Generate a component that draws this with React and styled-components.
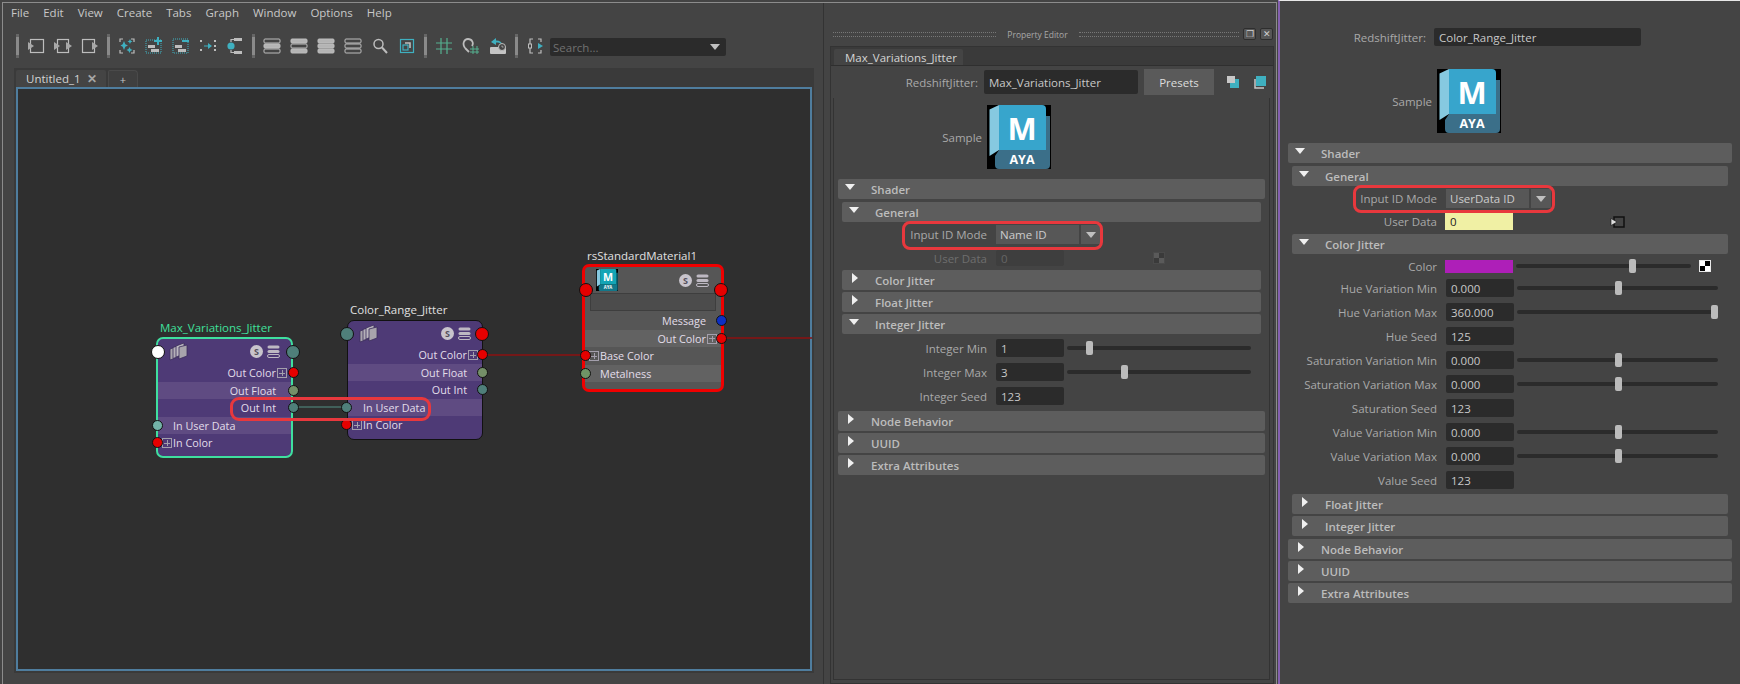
import React from "react";
import styled, { createGlobalStyle } from "styled-components";

const GlobalStyle = createGlobalStyle`
	html, body {
		margin: 0;
		padding: 0;
		background: #444444;
		overflow: hidden;
	}
	* {
		box-sizing: border-box;
	}
	body {
		font-family: "Open Sans", "Liberation Sans", sans-serif;
		font-size: 12px;
		color: #c4c4c4;
	}
`;

const MENU = ["File", "Edit", "View", "Create", "Tabs", "Graph", "Window", "Options", "Help"];

const TEAL = "#3fb0c0";
const GREY = "#bdbdbd";

// toolbar drawings, 18 x 18
const arrowLeft = (
	<>
		<rect x="3.5" y="2.5" width="13" height="13" fill="none" stroke={GREY} strokeWidth="1.2" />
		<path d="M1 5l6 4-6 4z" fill="#a8a8a8" />
	</>
);
const arrowBoth = (
	<>
		<rect x="3.5" y="2.5" width="11" height="13" fill="none" stroke={GREY} strokeWidth="1.2" />
		<path d="M0 5l6 4-6 4zM12 5l6 4-6 4z" fill="#a8a8a8" />
	</>
);
const arrowRight = (
	<>
		<rect x="1.5" y="2.5" width="12" height="13" fill="none" stroke={GREY} strokeWidth="1.2" />
		<path d="M11 5l6 4-6 4z" fill="#a8a8a8" />
	</>
);
const sparkle = (
	<>
		<path d="M2 5V2h3M13 2h3v3M2 13v3h3M13 16h3v-3" fill="none" stroke={GREY} strokeWidth="1.2" />
		<path d="M6 4l1.3 3.2L10 8.5 7.3 9.8 6 13 4.7 9.8 2.5 8.5l2.2-1.3zM12 2l.8 1.8 1.7.7-1.7.8L12 7l-.8-1.7-1.7-.8 1.7-.7zM11.5 10l1 2 2 1-2 1-1 2-1-2-2-1 2-1z" fill={TEAL} />
	</>
);
const dottedPlus = (
	<>
		<rect x="1" y="3" width="15" height="13" fill="none" stroke={TEAL} strokeWidth="1" strokeDasharray="1 1" />
		<rect x="3" y="8" width="7" height="3" fill={GREY} />
		<rect x="6" y="12" width="8" height="3" fill={GREY} />
		<path d="M9 4h8M13 0v8" stroke={TEAL} strokeWidth="2" />
	</>
);
const dottedMinus = (
	<>
		<rect x="1" y="2" width="15" height="14" fill="none" stroke={TEAL} strokeWidth="1" strokeDasharray="1 1" />
		<rect x="3" y="8" width="7" height="3" fill={GREY} />
		<rect x="6" y="12" width="8" height="3" fill={GREY} />
		<path d="M10 4h7" stroke={TEAL} strokeWidth="2" />
	</>
);
const dotsArrow = (
	<>
		<path d="M1 3h2v2H1zM1 12h2v2H1zM15 3h2v2h-2zM15 8h2v2h-2zM15 12h2v2h-2z" fill={GREY} />
		<path d="M5 8.5h4V6l4 3-4 3V9.5H5z" fill={TEAL} />
	</>
);
const branch = (
	<>
		<circle cx="5" cy="9" r="3.6" fill={TEAL} />
		<path d="M5 5V2.5h3M5 13v2.5h3" fill="none" stroke={GREY} strokeWidth="1.2" />
		<rect x="8" y="1" width="8" height="3" fill={GREY} />
		<rect x="8" y="14" width="8" height="3" fill={GREY} />
	</>
);
const listIcon = (fills) => (
	<>
		{[2, 7, 12].map((y, i) => (
			<rect key={y} x="1" y={y} width="16" height="4" rx="1" fill={fills[i] ? "#b4b4b4" : "none"} stroke={GREY} strokeWidth="1" />
		))}
	</>
);
const magnifier = (
	<>
		<circle cx="7.5" cy="7" r="4.5" fill="none" stroke={GREY} strokeWidth="1.5" />
		<path d="M11 10.5l5 5.5" stroke={GREY} strokeWidth="2" />
	</>
);
const framed = (
	<>
		<rect x="2.5" y="2.5" width="13" height="13" fill="none" stroke={TEAL} strokeWidth="1.2" />
		<rect x="5" y="8" width="5" height="5" fill="none" stroke={TEAL} strokeWidth="1.2" />
		<path d="M7 6h5v5" fill="none" stroke={GREY} strokeWidth="1.6" />
	</>
);
const grid = <path d="M6 1v16M12 1v16M1 6h16M1 12h16" stroke="#55b08f" strokeWidth="1.2" />;
const magnet = (
	<>
		<path d="M3 11C0 7 2 2 6 2s6 4 4 7" fill="none" stroke={GREY} strokeWidth="1.8" />
		<path d="M3 11l4 4" stroke={GREY} strokeWidth="1.8" />
		<path d="M11 9v8M15 9v8M8 12h9M8 15h9" stroke="#55b08f" strokeWidth="1" />
	</>
);
const undoClock = (
	<>
		<path d="M2 5l5-4v2.5c4 0 6 1.5 6 4.5-1.500-2-3-2.500-6-2.500V8z" fill={TEAL} />
		<rect x="1" y="10" width="16" height="7" rx="1" fill="#c4c4c4" />
		<circle cx="13" cy="10" r="3.500" fill="#444" stroke={GREY} strokeWidth="1" />
		<path d="M13 8.500V10h1.500" stroke={GREY} strokeWidth="0.8" fill="none" />
	</>
);
const bracket = (
	<>
		<path d="M7 2H4v5M4 11v5h3M12 2h3v3M15 13v3h-3" fill="none" stroke={GREY} strokeWidth="1.2" />
		<rect x="2.500" y="7" width="3" height="4" fill="none" stroke={GREY} strokeWidth="1" />
		<path d="M12 6l5 3-5 3z" fill={TEAL} />
	</>
);

const TOOLS = [
	"grip", arrowLeft, arrowBoth, arrowRight,
	"grip", sparkle, dottedPlus, dottedMinus, dotsArrow, branch,
	"grip", listIcon([0, 1, 0]), listIcon([1, 0, 1]), listIcon([1, 1, 1]), listIcon([0, 0, 0]), magnifier, framed,
	"grip", grid, magnet, undoClock,
	"grip", bracket,
];

const MayaLogo = ({ $color = "#37a5cc", $dark = "#3b6f89", $size = 64 }) => (
	<LogoSvg viewBox="0 0 64 64" width={$size} height={$size}>
		<rect width="64" height="64" fill="#000" />
		<path d="M2.500 4.500L12 0v45l-9.500 6z" fill="#86c9e0" />
		<path d="M8 51l4-6h47V11h4v49a4 4 0 0 1-4 4H12a4 4 0 0 1-4-4z" fill={$dark} />
		<path d="M12 0h43a4 4 0 0 1 4 4v41H12z" fill={$color} />
		<text x="35" y="35" textAnchor="middle" fontFamily="Open Sans" fontWeight="700" fontSize="31" fill="#fff">M</text>
		<text x="35" y="59" textAnchor="middle" fontFamily="Open Sans" fontWeight="700" fontSize="12.500" fill="#fff">AYA</text>
	</LogoSvg>
);

const StackIcon = () => (
	<svg width="20" height="20" viewBox="0 0 20 20">
		<path d="M1 7l8-3v11l-8 3z" fill="#a8a4ac" stroke="#3a2c5a" strokeWidth="0.8" />
		<path d="M4 5.500l8-3v11l-8 3z" fill="#b4b0b8" stroke="#3a2c5a" strokeWidth="0.8" />
		<path d="M7 4l8-3v11l-8 3z" fill="#bcb8c0" stroke="#3a2c5a" strokeWidth="0.8" />
		<path d="M10 5l8-2v11l-8 3z" fill="#a8a4ac" stroke="#3a2c5a" strokeWidth="0.8" />
	</svg>
);

const ListBars = () => (
	<svg width="13" height="13" viewBox="0 0 13 13">
		<rect x="0.500" y="0.500" width="12" height="3" rx="1.500" fill="#bdb8c2" />
		<rect x="0.500" y="5" width="12" height="3" rx="1.500" fill="#bdb8c2" />
		<rect x="0.500" y="9.500" width="12" height="3" rx="1.500" fill="none" stroke="#bdb8c2" />
	</svg>
);

const GraphNode = ({ title, $x, $y, $width, $border, $titleColor, $bg, $stripe, $ports, $pad, headerPort, logo, nameField, rows }) => (
	<NodeBox $x={$x} $y={$y} $width={$width} $border={$border} $bg={$bg} $stripe={$stripe} $ports={$ports} $pad={$pad}>
		<NodeTitle $color={$titleColor}>{title}</NodeTitle>
		<NodeHeader $field={nameField}>
			<Port $side="left" $big $color={headerPort[0]} />
			<Port $side="right" $big $color={headerPort[1]} />
			<HeaderIcon>{logo ? <MayaLogo $color="#14a5b5" $dark="#13788a" $size={22} /> : <StackIcon />}</HeaderIcon>
			<HeaderRight>
				<SBadge>S</SBadge>
				<ListBars />
			</HeaderRight>
			{nameField && <NameBox />}
		</NodeHeader>
		<NodeRows>
			{rows.map((r) => (
				<NodeRow key={r.label} $in={r.in}>
					{r.plus && <PlusBox $in={r.in} />}
					{r.label}
					<Port $side={r.in ? "left" : "right"} $color={r.color} />
				</NodeRow>
			))}
		</NodeRows>
	</NodeBox>
);

const Section = ({ title, open }) => (
	<Bar>
		<Arrow $open={open} />
		<BarTitle>{title}</BarTitle>
	</Bar>
);

const Slider = ({ width, pos }) => (
	<Track $width={width}>
		<Thumb style={{ left: `${pos}px` }} />
	</Track>
);

const NumberRow = ({ label, value, width, pos }) => (
	<AttrRow>
		<AttrLabel>{label}</AttrLabel>
		<Field>{value}</Field>
		{pos !== undefined && <Slider width={width} pos={pos} />}
	</AttrRow>
);

const Combo = ({ value, $width }) => (
	<ComboBox>
		<ComboText $width={$width}>{value}</ComboText>
		<ComboArrow>
			<DownTriangle />
		</ComboArrow>
	</ComboBox>
);

const JITTER_ROWS = [
	["Hue Variation Min", "0.000", 98],
	["Hue Variation Max", "360.000", 194],
	["Hue Seed", "125"],
	["Saturation Variation Min", "0.000", 98],
	["Saturation Variation Max", "0.000", 98],
	["Saturation Seed", "123"],
	["Value Variation Min", "0.000", 98],
	["Value Variation Max", "0.000", 98],
	["Value Seed", "123"],
];

export default function App() {
	return (
		<Page>
			<GlobalStyle />
			<EditorWindow>
				<GraphPane>
					<MenuBar>
						{MENU.map((m) => (
							<MenuItem key={m}>{m}</MenuItem>
						))}
					</MenuBar>
					<Toolbar>
						{TOOLS.map((t, i) =>
							t === "grip" ? (
								<GripSlot key={i}>
									<Grip />
								</GripSlot>
							) : (
								<ToolSlot key={i}>
									<svg width="18" height="18" viewBox="0 0 18 18">
										{t}
									</svg>
								</ToolSlot>
							),
						)}
						<SearchBox>
							Search...
							<DownTriangle />
						</SearchBox>
					</Toolbar>
					<GraphFrame>
						<TabStrip>
							<GraphTab>
								Untitled_1
								<TabClose>✕</TabClose>
							</GraphTab>
							<PlusTab>+</PlusTab>
						</TabStrip>
						<Canvas>
							<Wires width="794" height="580">
								<path d="M466 266H566M706 249H794" stroke="#8c1212" strokeWidth="1.500" fill="none" />
								<path d="M275 318H329" stroke="#41605a" strokeWidth="2" fill="none" />
							</Wires>
							<GraphNode
								title="Max_Variations_Jitter"
								$x={138}
								$y={248}
								$width={137}
								$border="2px solid #3fdf9f"
								$titleColor="#3fe09c"
								$bg="#4e3a76"
								$stripe="#5f4b82"
								$ports={["-6.500px", "-7.500px"]}
								$pad="4px"
								headerPort={["#ffffff", "#4f7f7a"]}
								rows={[
									{ label: "Out Color", color: "#e60000", plus: true },
									{ label: "Out Float", color: "#748f68" },
									{ label: "Out Int", color: "#4f7f7a" },
									{ label: "In User Data", color: "#74b3a8", in: true },
									{ label: "In Color", color: "#e60000", in: true, plus: true },
								]}
							/>
							<GraphNode
								title="Color_Range_Jitter"
								$x={329}
								$y={231}
								$width={136}
								$border="1px solid #111"
								$titleColor="#e0e0e0"
								$bg="#4e3a76"
								$stripe="#5f4b82"
								$ports={["-7.500px", "-5.500px"]}
								$pad="5px"
								headerPort={["#4f7f7a", "#e60000"]}
								rows={[
									{ label: "Out Color", color: "#e60000", plus: true },
									{ label: "Out Float", color: "#748f68" },
									{ label: "Out Int", color: "#4f7f7a" },
									{ label: "In User Data", color: "#4f7f7a", in: true },
									{ label: "In Color", color: "#e60000", in: true, plus: true },
								]}
							/>
							<GraphNode
								title="rsStandardMaterial1"
								$x={564}
								$y={175}
								$width={142}
								$border="3px solid #f00000"
								$titleColor="#e0e0e0"
								$bg="#565656"
								$stripe="#626262"
								$ports={["-5.500px", "-5.500px"]}
								$pad="7px"
								headerPort={["#e60000", "#e60000"]}
								logo
								nameField
								rows={[
									{ label: "Message", color: "#0c2fc4" },
									{ label: "Out Color", color: "#e60000", plus: true },
									{ label: "Base Color", color: "#e60000", in: true, plus: true },
									{ label: "Metalness", color: "#6f9466", in: true },
								]}
							/>
							<WireHighlight />
						</Canvas>
					</GraphFrame>
				</GraphPane>

				<PropertyPane>
					<TitleBar>
						<Dots $width={163} />
						<PaneTitle>Property Editor</PaneTitle>
						<Dots $width={160} />
						<PaneButton>❐</PaneButton>
						<PaneButton>✕</PaneButton>
					</TitleBar>
					<PropFrame>
						<PropTabs>
							<PropTab>Max_Variations_Jitter</PropTab>
						</PropTabs>
						<NameRow>
							<NameLabel>RedshiftJitter:</NameLabel>
							<NameField $width={154}>Max_Variations_Jitter</NameField>
							<PresetsButton>Presets</PresetsButton>
							<SmallIcon $left={13}>
								<svg width="12" height="12" viewBox="0 0 12 12">
									<rect width="8" height="7" fill="#c8c8c8" />
									<path d="M8 3h4v9H3V7h5z" fill={TEAL} />
								</svg>
							</SmallIcon>
							<SmallIcon $left={14}>
								<svg width="13" height="13" viewBox="0 0 13 13">
									<rect x="3" width="10" height="10" fill={TEAL} />
									<path d="M2 3v9h9" fill="none" stroke="#c8c8c8" strokeWidth="1.500" />
								</svg>
							</SmallIcon>
						</NameRow>
						<Scroller>
							<SampleRow>
								<SampleLabel>Sample</SampleLabel>
								<MayaLogo />
							</SampleRow>
							<Section title="Shader" open />
							<SubGroup>
								<Section title="General" open />
								<AttrRow $first>
									<AttrLabel>Input ID Mode</AttrLabel>
									<Combo value="Name ID" $width={83} />
									<RedRing $left={60} $top={-4} $w={201} $h={29} />
								</AttrRow>
								<UserDataRow>
									<AttrLabel $dim>User Data</AttrLabel>
									<Field $dim>0</Field>
									<Checker $dim $left={89} />
								</UserDataRow>
								<Section title="Color Jitter" />
								<Section title="Float Jitter" />
								<Section title="Integer Jitter" open />
								<IntegerRows>
									<NumberRow label="Integer Min" value="1" width={184} pos={19} />
									<NumberRow label="Integer Max" value="3" width={184} pos={54} />
									<NumberRow label="Integer Seed" value="123" />
								</IntegerRows>
							</SubGroup>
							<Section title="Node Behavior" />
							<Section title="UUID" />
							<Section title="Extra Attributes" />
						</Scroller>
					</PropFrame>
				</PropertyPane>
			</EditorWindow>

			<SidePanel>
				<SideName>
					<NameLabel $side>RedshiftJitter:</NameLabel>
					<NameField $width={207} $short>Color_Range_Jitter</NameField>
				</SideName>
				<SampleRow>
					<SampleLabel>Sample</SampleLabel>
					<MayaLogo />
				</SampleRow>
				<Section title="Shader" open />
				<SubGroup>
					<Section title="General" open />
					<AttrRow $first>
						<AttrLabel>Input ID Mode</AttrLabel>
						<Combo value="UserData ID" $width={83} />
						<RedRing $left={61} $top={-4} $w={202} $h={28} />
					</AttrRow>
					<SideDataRow>
						<AttrLabel>User Data</AttrLabel>
						<YellowField>0</YellowField>
						<MapIcon viewBox="0 0 16 12" width="16" height="12">
							<rect x="4" y="1" width="10" height="10" fill="none" stroke="#111" strokeWidth="1.500" />
							<path d="M1 2.500l6 3.500-6 3.500z" fill="#ddd" stroke="#111" strokeWidth="0.600" />
						</MapIcon>
					</SideDataRow>
					<Section title="Color Jitter" open />
					<ColorRow>
						<AttrLabel>Color</AttrLabel>
						<Swatch />
						<Slider width={175} pos={113} />
						<Checker $left={8} />
					</ColorRow>
					<JitterRows>
						{JITTER_ROWS.map(([label, value, pos]) => (
							<NumberRow key={label} label={label} value={value} width={201} pos={pos} />
						))}
					</JitterRows>
					<Section title="Float Jitter" />
					<Section title="Integer Jitter" />
				</SubGroup>
				<Section title="Node Behavior" />
				<Section title="UUID" />
				<Section title="Extra Attributes" />
			</SidePanel>
		</Page>
	);
}

const Page = styled.div`
	width: 1740px;
	height: 684px;
	display: flex;
	background: #444444;
	overflow: hidden;
`;

const EditorWindow = styled.div`
	width: 1275px;
	height: 682px;
	margin: 2px 0 0 2px;
	display: flex;
	border-top: 1px solid #8c8c8c;
	border-left: 1px solid #8c8c8c;
	border-right: 1px solid #8c8c8c;
	background: #444444;
	flex-shrink: 0;
`;

const GraphPane = styled.div`
	width: 821px;
	display: flex;
	flex-direction: column;
	border-right: 1px solid #333333;
`;

const MenuBar = styled.div`
	height: 18px;
	display: flex;
	align-items: center;
	gap: 14px;
	padding-left: 8px;
`;

const MenuItem = styled.span`
	font-size: 11.5px;
	color: #c8c8c8;
`;

const Toolbar = styled.div`
	height: 28px;
	margin: 11px 0 8px;
	padding-left: 9px;
	display: flex;
	align-items: center;
`;

const GripSlot = styled.div`
	width: 10px;
	display: flex;
	justify-content: center;
`;

const Grip = styled.div`
	width: 3px;
	height: 24px;
	background: linear-gradient(#666 0 3px, #8a8a8a 3px 21px, #666 21px);
`;

const ToolSlot = styled.div`
	width: 27px;
	height: 18px;
	display: flex;
	justify-content: center;
`;

const SearchBox = styled.div`
	width: 176px;
	height: 18px;
	margin: 2px 0 0 2px;
	padding: 0 6px 0 3px;
	display: flex;
	align-items: center;
	justify-content: space-between;
	background: #2b2b2b;
	border-radius: 2px;
	color: #717171;
	font-size: 11.5px;
`;

const DownTriangle = styled.span`
	width: 0;
	height: 0;
	border-left: 5px solid transparent;
	border-right: 5px solid transparent;
	border-top: 6px solid #c0c0c0;
`;

const GraphFrame = styled.div`
	width: 800px;
	height: 605px;
	margin-left: 11px;
	display: flex;
	flex-direction: column;
	background: #3a3a3a;
`;

const TabStrip = styled.div`
	height: 19px;
	padding: 2px 0 0 2px;
	display: flex;
	gap: 2px;
	flex-shrink: 0;
`;

const GraphTab = styled.div`
	width: 90px;
	height: 17px;
	padding-left: 10px;
	display: flex;
	align-items: center;
	background: #444444;
	border-radius: 2px 2px 0 0;
	font-size: 11.5px;
	color: #d4d4d4;
`;

const TabClose = styled.span`
	margin-left: 6px;
	font-size: 12px;
	font-weight: 700;
	color: #a6a6a6;
`;

const PlusTab = styled.div`
	width: 30px;
	height: 17px;
	display: flex;
	align-items: center;
	justify-content: center;
	border: 1px solid #4a4a4a;
	border-bottom: 0;
	border-radius: 2px 4px 0 0;
	background: #3f3f3f;
	font-size: 11px;
`;

const Canvas = styled.div`
	position: relative;
	flex: 1;
	margin: 0 2px 2px;
	border: 2px solid #4f7d9e;
	background: #2f2f2f;
`;

const Wires = styled.svg`
	position: absolute;
	left: 0;
	top: 0;
`;

const NodeBox = styled.div`
	position: absolute;
	left: ${(p) => p.$x}px;
	top: ${(p) => p.$y}px;
	width: ${(p) => p.$width}px;
	border: ${(p) => p.$border};
	border-radius: 7px;
	background: ${(p) => p.$bg};
	padding-bottom: ${(p) => p.$pad};
	--port-left: ${(p) => p.$ports[0]};
	--port-right: ${(p) => p.$ports[1]};
	--stripe: ${(p) => p.$stripe};
`;

const NodeTitle = styled.div`
	position: absolute;
	left: 2px;
	bottom: calc(100% + 4px);
	white-space: nowrap;
	font-size: 11.5px;
	color: ${(p) => p.$color};
`;

const NodeHeader = styled.div`
	position: relative;
	height: ${(p) => (p.$field ? 45 : 25)}px;
	padding: ${(p) => (p.$field ? "2px 12px 0 11px" : "0 11px 0 11px")};
	display: flex;
	justify-content: space-between;
	align-items: ${(p) => (p.$field ? "flex-start" : "center")};
`;

const HeaderIcon = styled.div`
	display: flex;
`;

const LogoSvg = styled.svg`
	display: block;
	flex-shrink: 0;
`;

const HeaderRight = styled.div`
	display: flex;
	align-items: center;
	gap: 4px;
	height: 22px;
`;

const SBadge = styled.span`
	width: 13px;
	height: 13px;
	border-radius: 50%;
	background: #c8c4cc;
	color: #55505c;
	font-size: 9px;
	font-weight: 700;
	line-height: 13px;
	text-align: center;
`;

const NameBox = styled.div`
	position: absolute;
	left: 5px;
	top: 26px;
	width: 126px;
	height: 18px;
	background: #4c4c4c;
	border: 1px solid #3e3e3e;
`;

const NodeRows = styled.div`
	display: flex;
	flex-direction: column;
`;

const NodeRow = styled.div`
	position: relative;
	height: 17.5px;
	line-height: 17.5px;
	padding: 0 15px;
	text-align: ${(p) => (p.$in ? "left" : "right")};
	font-size: 10.8px;
	color: #e2deea;
	white-space: nowrap;

	&:nth-child(even) {
		background: var(--stripe);
	}
`;

const PlusBox = styled.span`
	position: absolute;
	top: 4px;
	${(p) => (p.$in ? "left: 4px;" : "right: 4px;")}
	width: 10px;
	height: 10px;
	border: 1px solid #a39fac;
	background:
		linear-gradient(#a39fac, #a39fac) center / 6px 1px no-repeat,
		linear-gradient(#a39fac, #a39fac) center / 1px 6px no-repeat;
`;

const Port = styled.span`
	position: absolute;
	z-index: 2;
	top: 50%;
	${(p) => (p.$side === "left" ? "left: var(--port-left);" : "right: var(--port-right);")}
	width: ${(p) => (p.$big ? 14 : 11)}px;
	height: ${(p) => (p.$big ? 14 : 11)}px;
	margin-top: ${(p) => (p.$big ? -7 : -5.5)}px;
	${(p) => p.$big && "margin-left: -1px; margin-right: -1px;"}
	border-radius: 50%;
	border: 1px solid #111111;
	background: ${(p) => p.$color};
`;

const WireHighlight = styled.div`
	position: absolute;
	left: 212px;
	top: 308px;
	width: 201px;
	height: 24px;
	border: 3px solid #e8383d;
	border-radius: 9px;
	z-index: 3;
`;

const PropertyPane = styled.div`
	width: 452px;
	display: flex;
	flex-direction: column;
	padding: 0 2px 0 6px;
`;

const TitleBar = styled.div`
	height: 43px;
	padding: 19px 0 0 3px;
	display: flex;
	align-items: center;
`;

const Dots = styled.div`
	width: ${(p) => p.$width}px;
	height: 5px;
	border-top: 1px dotted #777777;
	border-bottom: 1px dotted #777777;
`;

const PaneTitle = styled.div`
	width: 83px;
	text-align: center;
	font-size: 8.5px;
	color: #a8a8a8;
	white-space: nowrap;
`;

const PaneButton = styled.div`
	width: 13px;
	height: 12px;
	margin-left: 4px;
	border: 1px solid #2e2e2e;
	border-radius: 2px;
	background: #565656;
	color: #d0d0d0;
	font-size: 9px;
	line-height: 10px;
	text-align: center;
	overflow: hidden;
`;

const PropFrame = styled.div`
	flex: 1;
	display: flex;
	flex-direction: column;
	border: 1px solid #333333;
	min-height: 0;
`;

const PropTabs = styled.div`
	height: 19px;
	padding: 2px 0 0 3px;
	background: #3a3a3a;
	border-bottom: 1px solid #2f2f2f;
	flex-shrink: 0;
`;

const PropTab = styled.div`
	width: 129px;
	height: 16px;
	padding-left: 11px;
	background: #444444;
	border-radius: 2px 2px 0 0;
	font-size: 11.5px;
	line-height: 17px;
	color: #d4d4d4;
`;

const NameRow = styled.div`
	height: 32px;
	display: flex;
	align-items: center;
	flex-shrink: 0;
`;

const NameLabel = styled.div`
	width: ${(p) => (p.$side ? 138 : 147)}px;
	margin-right: ${(p) => (p.$side ? 8 : 6)}px;
	text-align: right;
	font-size: 11.5px;
	color: #a9a9a9;
`;

const NameField = styled.div`
	width: ${(p) => p.$width}px;
	height: ${(p) => (p.$short ? 18 : 24)}px;
	padding-left: 5px;
	display: flex;
	align-items: center;
	background: #2b2b2b;
	border-radius: 2px;
	font-size: 11.5px;
	color: #c8c8c8;
`;

const PresetsButton = styled.div`
	width: 70px;
	height: 26px;
	margin-left: 6px;
	display: flex;
	align-items: center;
	justify-content: center;
	background: #5a5a5a;
	font-size: 11.5px;
	color: #dddddd;
`;

const SmallIcon = styled.div`
	margin-left: ${(p) => p.$left}px;
	display: flex;
`;

const Scroller = styled.div`
	flex: 1;
	margin: 0 3px 3px 2px;
	padding: 7px 4px 0;
	border: 1px solid #333333;
	border-top: 0;
`;

const SampleRow = styled.div`
	display: flex;
	align-items: center;
	margin-bottom: 10px;
`;

const SampleLabel = styled.div`
	width: 144px;
	margin-right: 5px;
	text-align: right;
	font-size: 11.5px;
	color: #a9a9a9;
`;

const Bar = styled.div`
	height: 20px;
	margin: 0 0 2px;
	display: flex;
	align-items: center;
	padding-left: 7px;
	background: #5d5d5d;
	border-radius: 2px;
`;

const Arrow = styled.span`
	width: 11px;
	margin-right: 15px;
	display: block;
	height: 12px;
	margin-top: -3px;
	position: relative;

	&::before {
		content: "";
		position: absolute;
		${(p) =>
			p.$open
				? `left: 0;
		top: 2px;
		border-left: 5.500px solid transparent;
		border-right: 5.500px solid transparent;
		border-top: 6px solid #f0f0f0;`
				: `left: 3px;
		top: 0;
		border-top: 5.500px solid transparent;
		border-bottom: 5.500px solid transparent;
		border-left: 6px solid #f0f0f0;`}
	}
`;

const BarTitle = styled.span`
	font-size: 11.5px;
	font-weight: 600;
	color: #bcbcbc;
`;

const SubGroup = styled.div`
	margin: 3px 4px;
`;

const AttrRow = styled.div`
	position: relative;
	display: flex;
	align-items: center;
	height: ${(p) => (p.$first ? 19 : 18)}px;
	margin-top: ${(p) => (p.$first ? 3 : 0)}px;
`;

const AttrLabel = styled.div`
	width: 145px;
	margin-right: 9px;
	text-align: right;
	font-size: 11.5px;
	color: ${(p) => (p.$dim ? "#6e6e6e" : "#a9a9a9")};
	white-space: nowrap;
`;

const Field = styled.div`
	width: 68px;
	height: 100%;
	padding: 1px 0 0 5px;
	display: flex;
	align-items: center;
	background: ${(p) => (p.$dim ? "#3e3e3e" : "#2b2b2b")};
	border-radius: 2px;
	font-size: 11.5px;
	color: ${(p) => (p.$dim ? "#656565" : "#c8c8c8")};
`;

const ComboBox = styled.div`
	display: flex;
	gap: 2px;
	height: 100%;
`;

const ComboText = styled.div`
	width: ${(p) => p.$width}px;
	padding-left: 4px;
	display: flex;
	align-items: center;
	background: #575757;
	font-size: 11.5px;
	color: #cccccc;
`;

const ComboArrow = styled.div`
	width: 20px;
	display: flex;
	align-items: center;
	justify-content: center;
	background: #575757;
`;

const RedRing = styled.div`
	position: absolute;
	left: ${(p) => p.$left}px;
	top: ${(p) => p.$top}px;
	width: ${(p) => p.$w}px;
	height: ${(p) => p.$h}px;
	border: 3px solid #e8383d;
	border-radius: 8px;
	pointer-events: none;
`;

const UserDataRow = styled.div`
	display: flex;
	align-items: center;
	height: 16px;
	margin: 6px 0 4px;
`;

const SideDataRow = styled.div`
	display: flex;
	align-items: center;
	height: 17px;
	margin: 5px 0 4px;
`;

const YellowField = styled.div`
	width: 68px;
	height: 100%;
	margin-left: -1px;
	padding-left: 5px;
	display: flex;
	align-items: center;
	background: #f0f0a4;
	font-size: 11.5px;
	color: #222222;
`;

const MapIcon = styled.svg`
	margin-left: 97px;
`;

const Checker = styled.span`
	width: 12px;
	height: 12px;
	margin-left: ${(p) => p.$left}px;
	flex-shrink: 0;
	border: 1px solid ${(p) => (p.$dim ? "#4a4a4a" : "#e8e8e8")};
	background: ${(p) =>
		p.$dim
			? "conic-gradient(#3a3a3a 25%, #5a5a5a 0 50%, #3a3a3a 0 75%, #5a5a5a 0)"
			: "conic-gradient(#000 25%, #fff 0 50%, #000 0 75%, #fff 0)"};
`;

const IntegerRows = styled.div`
	display: flex;
	flex-direction: column;
	gap: 6px;
	margin: 5px 0 6px;
`;

const Track = styled.div`
	position: relative;
	width: ${(p) => p.$width}px;
	height: 4px;
	margin-left: 3px;
	background: #2b2b2b;
	border-radius: 2px;
	flex-shrink: 0;
`;

const Thumb = styled.span`
	position: absolute;
	top: -5px;
	width: 7px;
	height: 14px;
	background: #bbbbbb;
	border-radius: 2px;
`;

const SidePanel = styled.div`
	width: 462px;
	margin-left: 1px;
	padding: 28px 8px 0;
	border-left: 2px solid #8460b0;
	border-top: 1px solid #e8e8e8;
	background: #444444;
	flex-shrink: 0;
`;

const SideName = styled.div`
	display: flex;
	align-items: center;
	height: 18px;
	margin: -1px 0 23px;
`;

const ColorRow = styled.div`
	display: flex;
	align-items: center;
	height: 18px;
	margin: 3px 0 4px;
`;

const Swatch = styled.div`
	width: 68px;
	height: 13px;
	margin-left: -1px;
	background: #ae1fb8;
`;

const JitterRows = styled.div`
	display: flex;
	flex-direction: column;
	gap: 6px;
	margin-bottom: 5px;
`;
